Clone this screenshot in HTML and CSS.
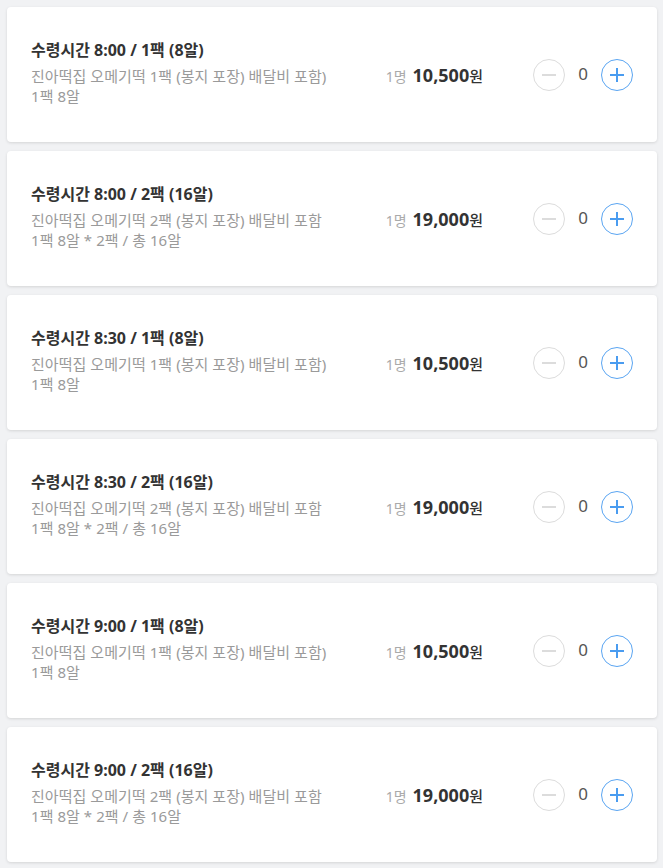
FILE: index.html
```html
<!DOCTYPE html>
<html lang="ko">
<head>
  <meta charset="UTF-8" />
  <title>상품 선택</title>
  <link rel="stylesheet" href="styles.css">
</head>
<body>
  <!-- 상품 목록 -->
  <div class="product-list">
    <div class="product-card">
      <div class="product-info">
        <div class="product-title">수령시간 8:00 / 1팩 (8알)</div>
        <div class="product-desc">진아떡집 오메기떡 1팩 (봉지 포장) 배달비 포함)</div>
        <div class="product-desc">1팩 8알</div>
      </div>
      <div class="price"><span class="unit">1명</span> <span class="amount">10,500</span><span class="won">원</span></div>
      <div class="counter">
        <button class="count-btn minus"><span></span></button>
        <span class="count">0</span>
        <button class="count-btn plus"><span></span></button>
      </div>
    </div>

    <div class="product-card">
      <div class="product-info">
        <div class="product-title">수령시간 8:00 / 2팩 (16알)</div>
        <div class="product-desc">진아떡집 오메기떡 2팩 (봉지 포장) 배달비 포함</div>
        <div class="product-desc">1팩 8알 * 2팩 / 총 16알</div>
      </div>
      <div class="price"><span class="unit">1명</span> <span class="amount">19,000</span><span class="won">원</span></div>
      <div class="counter">
        <button class="count-btn minus"><span></span></button>
        <span class="count">0</span>
        <button class="count-btn plus"><span></span></button>
      </div>
    </div>

    <div class="product-card">
      <div class="product-info">
        <div class="product-title">수령시간 8:30 / 1팩 (8알)</div>
        <div class="product-desc">진아떡집 오메기떡 1팩 (봉지 포장) 배달비 포함)</div>
        <div class="product-desc">1팩 8알</div>
      </div>
      <div class="price"><span class="unit">1명</span> <span class="amount">10,500</span><span class="won">원</span></div>
      <div class="counter">
        <button class="count-btn minus"><span></span></button>
        <span class="count">0</span>
        <button class="count-btn plus"><span></span></button>
      </div>
    </div>

    <div class="product-card">
      <div class="product-info">
        <div class="product-title">수령시간 8:30 / 2팩 (16알)</div>
        <div class="product-desc">진아떡집 오메기떡 2팩 (봉지 포장) 배달비 포함</div>
        <div class="product-desc">1팩 8알 * 2팩 / 총 16알</div>
      </div>
      <div class="price"><span class="unit">1명</span> <span class="amount">19,000</span><span class="won">원</span></div>
      <div class="counter">
        <button class="count-btn minus"><span></span></button>
        <span class="count">0</span>
        <button class="count-btn plus"><span></span></button>
      </div>
    </div>

    <div class="product-card">
      <div class="product-info">
        <div class="product-title">수령시간 9:00 / 1팩 (8알)</div>
        <div class="product-desc">진아떡집 오메기떡 1팩 (봉지 포장) 배달비 포함)</div>
        <div class="product-desc">1팩 8알</div>
      </div>
      <div class="price"><span class="unit">1명</span> <span class="amount">10,500</span><span class="won">원</span></div>
      <div class="counter">
        <button class="count-btn minus"><span></span></button>
        <span class="count">0</span>
        <button class="count-btn plus"><span></span></button>
      </div>
    </div>

    <div class="product-card">
      <div class="product-info">
        <div class="product-title">수령시간 9:00 / 2팩 (16알)</div>
        <div class="product-desc">진아떡집 오메기떡 2팩 (봉지 포장) 배달비 포함</div>
        <div class="product-desc">1팩 8알 * 2팩 / 총 16알</div>
      </div>
      <div class="price"><span class="unit">1명</span> <span class="amount">19,000</span><span class="won">원</span></div>
      <div class="counter">
        <button class="count-btn minus"><span></span></button>
        <span class="count">0</span>
        <button class="count-btn plus"><span></span></button>
      </div>
    </div>
  </div>
</body>
</html>
```

FILE: styles.css
```css
/* ====== Page ====== */
body {
  margin: 0;
  background: #f1f2f4;
  font-family: "Noto Sans", "Noto Sans CJK KR", sans-serif;
  color: #333;
}

.product-list {
  display: flex;
  flex-direction: column;
  gap: 9px;
  padding: 7px 6px 7px 7px;
}

/* ====== Card ====== */
.product-card {
  display: flex;
  align-items: center;
  height: 135px;
  padding: 0 24px;
  background: #fff;
  border-radius: 4px;
  box-shadow: 0 1px 3px rgba(0, 0, 0, 0.12);
}

.product-info {
  flex: 1;
  margin-top: -5px;
}
.product-title {
  font-size: 16px;
  font-weight: bold;
  line-height: 22px;
  margin-bottom: 5px;
  color: #333;
}
.product-desc {
  font-size: 15px;
  line-height: 20px;
  letter-spacing: 0.05px;
  color: #9a9a9a;
}

/* ====== Price ====== */
.price {
  display: flex;
  align-items: baseline;
  margin-right: 50px;
  white-space: nowrap;
}
.unit {
  font-size: 14px;
  color: #aaa;
  margin-right: 6px;
}
.amount {
  font-size: 18px;
  font-weight: bold;
  color: #333;
}
.won {
  font-size: 15px;
  font-weight: 500;
  color: #333;
}

/* ====== Counter ====== */
.counter {
  display: flex;
  align-items: center;
}
.count {
  width: 36px;
  text-align: center;
  font-size: 17px;
  color: #555;
  margin-top: -3px;
}
.count-btn {
  position: relative;
  width: 32px;
  height: 32px;
  padding: 0;
  border-radius: 50%;
  background: #fff;
  border: 1px solid #dcdcdc;
}
.count-btn span,
.count-btn.plus::after {
  position: absolute;
  left: 50%;
  top: 50%;
  width: 14px;
  height: 2px;
  margin: -1px 0 0 -7px;
  background: #dcdcdc;
}
.count-btn.plus {
  border-color: #5aa5f2;
}
.count-btn.plus span {
  background: #4a9cf0;
}
.count-btn.plus::after {
  content: "";
  background: #4a9cf0;
  transform: rotate(90deg);
}
```
